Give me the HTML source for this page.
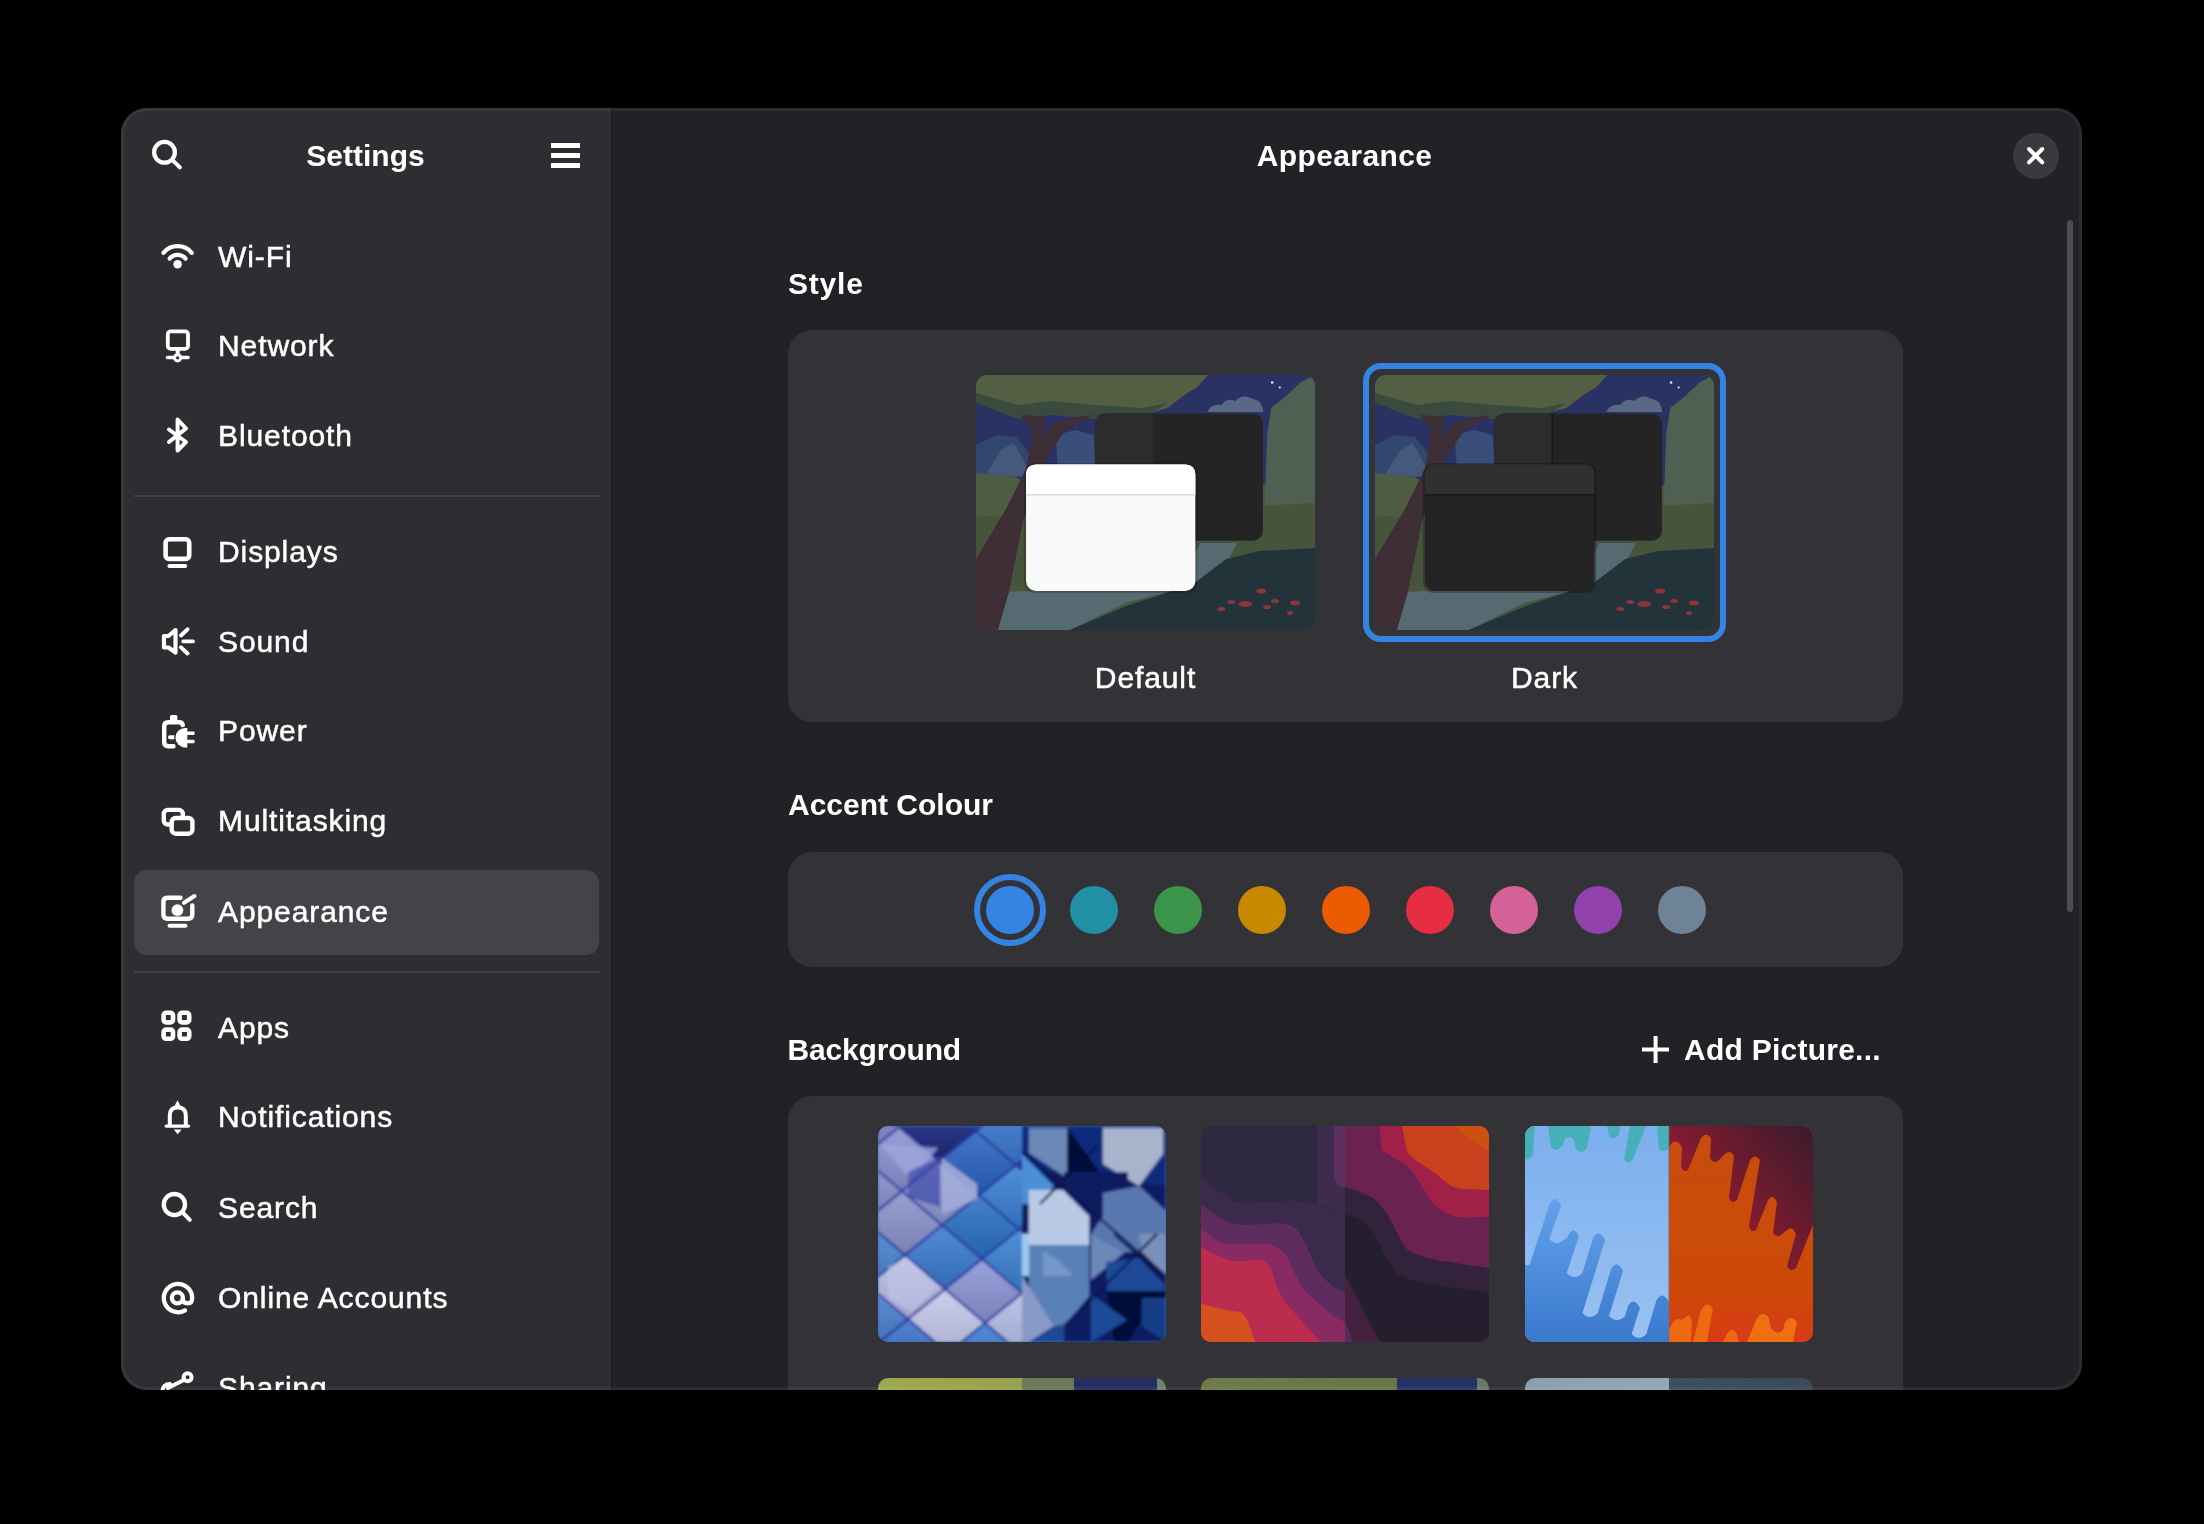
<!DOCTYPE html>
<html><head><meta charset="utf-8">
<style>
html,body{margin:0;padding:0;background:#000;width:2204px;height:1524px;overflow:hidden}
body{font-family:"Liberation Sans",sans-serif;color:#fff}
#win{position:absolute;left:121px;top:108px;width:1961px;height:1282px;border-radius:26px;overflow:hidden;background:#222226}
#in{position:absolute;left:-121px;top:-108px;width:2204px;height:1524px;will-change:transform}
.a{position:absolute}
.t{position:absolute;white-space:nowrap;font-size:30px;line-height:30px;letter-spacing:0.9px;-webkit-text-stroke:0.5px #fff;-webkit-font-smoothing:antialiased}
.b{letter-spacing:0;-webkit-text-stroke:0}
.b{font-weight:bold}
#side{position:absolute;left:121px;top:108px;width:490px;height:1282px;background:#2e2e32;border-right:2px solid #1d1d21}
.sep{position:absolute;left:134px;width:466px;height:2px;background:#414145}
.ic{position:absolute;left:162px;width:32px;height:32px}
.card{position:absolute;left:788px;width:1115px;background:#333337;border-radius:24px}
.dot{position:absolute;width:48px;height:48px;border-radius:50%;top:885.5px}
.thumb{position:absolute;width:288px;height:216px;border-radius:10px;overflow:hidden}
#border{position:absolute;left:121px;top:108px;width:1961px;height:1282px;border-radius:26px;box-shadow:inset 0 0 0 3px rgba(255,255,255,0.05);pointer-events:none}
</style></head>
<body>
<div id="win"><div id="in">
  <div id="side"></div>

  <!-- sidebar header -->
  
  <div class="t b" style="left:121px;width:489px;text-align:center;top:140.8px">Settings</div>
  <div class="a" style="left:551px;top:143px;width:29px;height:5px;background:#fff"></div>
  <div class="a" style="left:551px;top:153px;width:29px;height:5px;background:#fff"></div>
  <div class="a" style="left:551px;top:163px;width:29px;height:5px;background:#fff"></div>

  <!-- sidebar rows -->
  <div class="a" style="left:134px;top:870px;width:465px;height:85px;border-radius:13px;background:#444448"></div>
  <div class="sep" style="top:495px"></div>
  <div class="sep" style="top:971px"></div>

  <div class="t" style="left:218px;top:241.5px">Wi-Fi</div>
  <div class="t" style="left:218px;top:331px">Network</div>
  <div class="t" style="left:218px;top:420.5px">Bluetooth</div>
  <div class="t" style="left:218px;top:537px">Displays</div>
  <div class="t" style="left:218px;top:627px">Sound</div>
  <div class="t" style="left:218px;top:716px">Power</div>
  <div class="t" style="left:218px;top:806px">Multitasking</div>
  <div class="t" style="left:218px;top:897px">Appearance</div>
  <div class="t" style="left:218px;top:1012.5px">Apps</div>
  <div class="t" style="left:218px;top:1101.5px">Notifications</div>
  <div class="t" style="left:218px;top:1193px">Search</div>
  <div class="t" style="left:218px;top:1283px">Online Accounts</div>
  <div class="t" style="left:218px;top:1372.5px">Sharing</div>

  <!-- main header -->
  <div class="t b" style="left:609px;width:1471px;text-align:center;top:140.5px;letter-spacing:0.4px">Appearance</div>
  <div class="a" style="left:2012.5px;top:132.5px;width:46px;height:46px;border-radius:50%;background:#3a3a3e"></div>
  
  <div class="a" style="left:2067px;top:220px;width:6px;height:692px;border-radius:3px;background:#4e4e52"></div>

  <!-- Style -->
  <div class="t b" style="left:788px;top:268.5px;letter-spacing:0.8px">Style</div>
  <div class="card" style="top:330px;height:392px"></div>
  <div class="a" id="pv1" style="left:976px;top:375px;width:339px;height:255px;border-radius:11px;overflow:hidden;background:#55643f"><svg width="339" height="255" viewBox="0 0 340 255" preserveAspectRatio="none" style="display:block">
  <rect width="340" height="255" fill="#48563e"/>
  <!-- sky navy -->
  <rect x="0" y="0" width="340" height="110" fill="#293262"/>
  <!-- left blue mountains -->
  <path d="M0 70 L20 60 L40 62 L55 80 L60 100 L0 105 Z" fill="#33466e"/>
  <path d="M10 100 L25 75 L38 68 L50 90 L52 102 Z" fill="#46587c"/>
  <path d="M80 60 L100 55 L118 60 L120 92 L82 95 Z" fill="#394e78"/>
  <!-- clouds -->
  <path d="M232 37 Q236 28 246 30 Q252 22 260 26 Q268 18 278 24 Q288 26 288 37 Z" fill="#66748e" opacity="0.8"/>
  <circle cx="297" cy="7.5" r="1.3" fill="#e8ecf4"/>
  <circle cx="304.6" cy="12.5" r="1.1" fill="#e8ecf4"/>
  <!-- canopy -->
  <path d="M0 0 H233 L222 12 L209 20 L192 33 L167 40 L117 38 L75 33 L42 38 L0 23 Z" fill="#545e42"/>
  <path d="M0 18 L42 30 L75 26 L117 30 L167 33 L192 28 L170 42 L117 44 L75 40 L42 44 L0 28 Z" fill="#3a4a3c"/>
  <!-- right cliff -->
  <path d="M340 0 V176 L288 178 L290 117 L292 60 L296 33 L310 22 L326 7 Z" fill="#4f6052"/>
  <!-- left green hill -->
  <path d="M0 98 L40 102 L60 115 L60 170 L0 175 Z" fill="#4e5c42"/>
  <!-- middle field -->
  <path d="M0 140 L120 150 L221 134 L340 128 L340 185 L0 215 Z" fill="#46543c"/>
  <!-- river -->
  <path d="M22 255 L94 255 L150 228 L218 210 L252 186 L262 168 L225 168 L210 196 L140 214 L22 217 Z" fill="#566a72"/>
  <!-- dark hill -->
  <path d="M94 255 L151 231 L218 209 L251 184 L284 176 L340 173 L340 255 Z" fill="#22343a"/>
  <!-- mushrooms -->
  <g fill="#8e3438">
    <ellipse cx="286" cy="216" rx="5" ry="2.5"/><ellipse cx="270" cy="229" rx="7" ry="3"/>
    <ellipse cx="256" cy="227" rx="4" ry="2"/><ellipse cx="246" cy="234" rx="4" ry="2"/>
    <ellipse cx="300" cy="226" rx="4" ry="2"/><ellipse cx="320" cy="228" rx="5" ry="2.5"/>
    <ellipse cx="292" cy="232" rx="4" ry="2"/><ellipse cx="315" cy="238" rx="3" ry="2"/>
  </g>
  <!-- trunk -->
  <path d="M0 184 L30 134 L50 94 L57 55 L45 40 L70 42 L67 60 L80 48 L100 42 L117 40 L90 55 L72 80 L67 94 L47 147 L33 217 L22 255 L0 255 Z" fill="#3e2e36"/>

  <rect x="119.6" y="38.5" width="168.2" height="127.2" rx="10" fill="#242424"/>
  <path d="M129.6 38.5 H177.4 V165.7 H129.6 Q119.6 165.7 119.6 155.7 V48.5 Q119.6 38.5 129.6 38.5 Z" fill="#2c2c2c"/>
  <rect x="48" y="88" width="174" height="130" rx="11" fill="#000" opacity="0.18"/>
  <rect x="50.2" y="89.5" width="169.8" height="126.4" rx="10" fill="#fafafa"/>
  <path d="M60.2 89.5 H210 Q220 89.5 220 99.5 V119 H50.2 V99.5 Q50.2 89.5 60.2 89.5 Z" fill="#ffffff"/>
  <rect x="50.2" y="119" width="169.8" height="1.6" fill="#dcdcdc"/>
</svg></div>
  <div class="a" style="left:1363px;top:363px;width:351px;height:267px;border-radius:18px;border:6px solid #3584e4"></div>
  <div class="a" id="pv2" style="left:1375px;top:375px;width:339px;height:255px;border-radius:11px;overflow:hidden;background:#55643f"><svg width="339" height="255" viewBox="0 0 340 255" preserveAspectRatio="none" style="display:block">
  <rect width="340" height="255" fill="#48563e"/>
  <!-- sky navy -->
  <rect x="0" y="0" width="340" height="110" fill="#293262"/>
  <!-- left blue mountains -->
  <path d="M0 70 L20 60 L40 62 L55 80 L60 100 L0 105 Z" fill="#33466e"/>
  <path d="M10 100 L25 75 L38 68 L50 90 L52 102 Z" fill="#46587c"/>
  <path d="M80 60 L100 55 L118 60 L120 92 L82 95 Z" fill="#394e78"/>
  <!-- clouds -->
  <path d="M232 37 Q236 28 246 30 Q252 22 260 26 Q268 18 278 24 Q288 26 288 37 Z" fill="#66748e" opacity="0.8"/>
  <circle cx="297" cy="7.5" r="1.3" fill="#e8ecf4"/>
  <circle cx="304.6" cy="12.5" r="1.1" fill="#e8ecf4"/>
  <!-- canopy -->
  <path d="M0 0 H233 L222 12 L209 20 L192 33 L167 40 L117 38 L75 33 L42 38 L0 23 Z" fill="#545e42"/>
  <path d="M0 18 L42 30 L75 26 L117 30 L167 33 L192 28 L170 42 L117 44 L75 40 L42 44 L0 28 Z" fill="#3a4a3c"/>
  <!-- right cliff -->
  <path d="M340 0 V176 L288 178 L290 117 L292 60 L296 33 L310 22 L326 7 Z" fill="#4f6052"/>
  <!-- left green hill -->
  <path d="M0 98 L40 102 L60 115 L60 170 L0 175 Z" fill="#4e5c42"/>
  <!-- middle field -->
  <path d="M0 140 L120 150 L221 134 L340 128 L340 185 L0 215 Z" fill="#46543c"/>
  <!-- river -->
  <path d="M22 255 L94 255 L150 228 L218 210 L252 186 L262 168 L225 168 L210 196 L140 214 L22 217 Z" fill="#566a72"/>
  <!-- dark hill -->
  <path d="M94 255 L151 231 L218 209 L251 184 L284 176 L340 173 L340 255 Z" fill="#22343a"/>
  <!-- mushrooms -->
  <g fill="#8e3438">
    <ellipse cx="286" cy="216" rx="5" ry="2.5"/><ellipse cx="270" cy="229" rx="7" ry="3"/>
    <ellipse cx="256" cy="227" rx="4" ry="2"/><ellipse cx="246" cy="234" rx="4" ry="2"/>
    <ellipse cx="300" cy="226" rx="4" ry="2"/><ellipse cx="320" cy="228" rx="5" ry="2.5"/>
    <ellipse cx="292" cy="232" rx="4" ry="2"/><ellipse cx="315" cy="238" rx="3" ry="2"/>
  </g>
  <!-- trunk -->
  <path d="M0 184 L30 134 L50 94 L57 55 L45 40 L70 42 L67 60 L80 48 L100 42 L117 40 L90 55 L72 80 L67 94 L47 147 L33 217 L22 255 L0 255 Z" fill="#3e2e36"/>

  <rect x="119.6" y="38.5" width="168.2" height="127.2" rx="10" fill="#242424"/>
  <path d="M129.6 38.5 H177.4 V165.7 H129.6 Q119.6 165.7 119.6 155.7 V48.5 Q119.6 38.5 129.6 38.5 Z" fill="#2c2c2c"/>
  <rect x="177" y="38.5" width="1.4" height="52" fill="#161616"/>
  <rect x="48" y="88" width="174" height="130" rx="11" fill="#000" opacity="0.25"/>
  <rect x="50.2" y="89.5" width="169.8" height="126.4" rx="10" fill="#242424"/>
  <path d="M60.2 89.5 H210 Q220 89.5 220 99.5 V119 H50.2 V99.5 Q50.2 89.5 60.2 89.5 Z" fill="#303030"/>
  <rect x="50.2" y="119" width="169.8" height="1.6" fill="#1a1a1a"/>
</svg></div>
  <div class="t" style="left:976px;width:339px;text-align:center;top:662.5px">Default</div>
  <div class="t" style="left:1375px;width:339px;text-align:center;top:662.5px">Dark</div>

  <!-- Accent -->
  <div class="t b" style="left:788px;top:790px">Accent Colour</div>
  <div class="card" style="top:852px;height:115px"></div>
  <div class="a" style="left:973.5px;top:873.5px;width:60px;height:60px;border-radius:50%;border:6px solid #3584e4"></div>
  <div class="dot" style="left:985.5px;background:#3584e4"></div>
  <div class="dot" style="left:1069.5px;background:#2190a4"></div>
  <div class="dot" style="left:1153.5px;background:#3a944a"></div>
  <div class="dot" style="left:1237.5px;background:#c88800"></div>
  <div class="dot" style="left:1321.5px;background:#ed5b00"></div>
  <div class="dot" style="left:1405.5px;background:#e62d42"></div>
  <div class="dot" style="left:1489.5px;background:#d56199"></div>
  <div class="dot" style="left:1573.5px;background:#9141ac"></div>
  <div class="dot" style="left:1657.5px;background:#6f8396"></div>

  <!-- Background -->
  <div class="t b" style="left:787.5px;top:1035px;letter-spacing:-0.15px">Background</div>
  
  <div class="t b" style="left:1684px;top:1035px;letter-spacing:0.25px">Add Picture...</div>
  <div class="card" style="top:1096px;height:400px"></div>
  <div class="thumb" id="th1" style="left:878px;top:1125.5px;background:#3a6cc8"><svg width="288" height="216" viewBox="0 0 288 216" style="display:block"><defs><filter id="bl2" x="-5%" y="-5%" width="110%" height="110%"><feGaussianBlur stdDeviation="1.7"/></filter><clipPath id="cl"><rect x="0" y="0" width="144" height="216"/></clipPath><clipPath id="cr"><rect x="144" y="0" width="144" height="216"/></clipPath><linearGradient id="sh" x1="0" y1="0" x2="0" y2="1"><stop offset="0" stop-color="#fff" stop-opacity="0.12"/><stop offset="1" stop-color="#000" stop-opacity="0.12"/></linearGradient></defs><g filter="url(#bl2)"><g clip-path="url(#cl)"><rect width="144" height="216" fill="#26369c"/><polygon points="22.7,1.1 60.9,33.6 96.3,4.9 58.1,-27.6" fill="#1e2a80"/><polygon points="22.7,1.1 60.9,33.6 96.3,4.9 58.1,-27.6" fill="url(#sh)"/><polygon points="-14.3,31.1 23.9,63.6 59.3,34.9 21.1,2.4" fill="#8a92d0"/><polygon points="-14.3,31.1 23.9,63.6 59.3,34.9 21.1,2.4" fill="url(#sh)"/><polygon points="62.7,35.1 100.9,67.6 136.3,38.9 98.1,6.4" fill="#2a62c0"/><polygon points="62.7,35.1 100.9,67.6 136.3,38.9 98.1,6.4" fill="url(#sh)"/><polygon points="25.7,65.1 63.9,97.6 99.3,68.9 61.1,36.4" fill="#8e98d2"/><polygon points="25.7,65.1 63.9,97.6 99.3,68.9 61.1,36.4" fill="url(#sh)"/><polygon points="102.7,69.1 140.9,101.6 176.3,72.9 138.1,40.4" fill="#3a7ed4"/><polygon points="102.7,69.1 140.9,101.6 176.3,72.9 138.1,40.4" fill="url(#sh)"/><polygon points="-51.3,61.1 -13.1,93.6 22.3,64.9 -15.9,32.4" fill="#8890cc"/><polygon points="-51.3,61.1 -13.1,93.6 22.3,64.9 -15.9,32.4" fill="url(#sh)"/><polygon points="-11.3,95.1 26.9,127.6 62.3,98.9 24.1,66.4" fill="#8a92cc"/><polygon points="-11.3,95.1 26.9,127.6 62.3,98.9 24.1,66.4" fill="url(#sh)"/><polygon points="65.7,99.1 103.9,131.6 139.3,102.9 101.1,70.4" fill="#2a70c4"/><polygon points="65.7,99.1 103.9,131.6 139.3,102.9 101.1,70.4" fill="url(#sh)"/><polygon points="-48.3,125.1 -10.1,157.6 25.3,128.9 -12.9,96.4" fill="#4a86d4"/><polygon points="-48.3,125.1 -10.1,157.6 25.3,128.9 -12.9,96.4" fill="url(#sh)"/><polygon points="-8.3,159.1 29.9,191.6 65.3,162.9 27.1,130.4" fill="#b8bce4"/><polygon points="-8.3,159.1 29.9,191.6 65.3,162.9 27.1,130.4" fill="url(#sh)"/><polygon points="28.7,129.1 66.9,161.6 102.3,132.9 64.1,100.4" fill="#3a7ad0"/><polygon points="28.7,129.1 66.9,161.6 102.3,132.9 64.1,100.4" fill="url(#sh)"/><polygon points="105.7,133.1 143.9,165.6 179.3,136.9 141.1,104.4" fill="#3a80d0"/><polygon points="105.7,133.1 143.9,165.6 179.3,136.9 141.1,104.4" fill="url(#sh)"/><polygon points="68.7,163.1 106.9,195.6 142.3,166.9 104.1,134.4" fill="#8a94d4"/><polygon points="68.7,163.1 106.9,195.6 142.3,166.9 104.1,134.4" fill="url(#sh)"/><polygon points="-45.3,189.1 -7.1,221.6 28.3,192.9 -9.9,160.4" fill="#4a80d0"/><polygon points="-45.3,189.1 -7.1,221.6 28.3,192.9 -9.9,160.4" fill="url(#sh)"/><polygon points="31.7,193.1 69.9,225.6 105.3,196.9 67.1,164.4" fill="#c4c8ec"/><polygon points="31.7,193.1 69.9,225.6 105.3,196.9 67.1,164.4" fill="url(#sh)"/><polygon points="71.7,227.1 109.9,259.6 145.3,230.9 107.1,198.4" fill="#3a7ad0"/><polygon points="71.7,227.1 109.9,259.6 145.3,230.9 107.1,198.4" fill="url(#sh)"/><polygon points="108.7,197.1 146.9,229.6 182.3,200.9 144.1,168.4" fill="#b4bce4"/><polygon points="108.7,197.1 146.9,229.6 182.3,200.9 144.1,168.4" fill="url(#sh)"/><polygon points="99.7,5.1 137.9,37.6 173.3,8.9 135.1,-23.6" fill="#3a78d0"/><polygon points="99.7,5.1 137.9,37.6 173.3,8.9 135.1,-23.6" fill="url(#sh)"/><polygon points="59.7,-28.9 97.9,3.6 133.3,-25.1 95.1,-57.6" fill="#2a50b0"/><polygon points="59.7,-28.9 97.9,3.6 133.3,-25.1 95.1,-57.6" fill="url(#sh)"/><polygon points="-17.3,-32.9 20.9,-0.4 56.3,-29.1 18.1,-61.6" fill="#5a62b8"/><polygon points="-17.3,-32.9 20.9,-0.4 56.3,-29.1 18.1,-61.6" fill="url(#sh)"/><polygon points="19.7,-62.9 57.9,-30.4 93.3,-59.1 55.1,-91.6" fill="#5a62b8"/><polygon points="19.7,-62.9 57.9,-30.4 93.3,-59.1 55.1,-91.6" fill="url(#sh)"/><polygon points="142.7,103.1 180.9,135.6 216.3,106.9 178.1,74.4" fill="#3a80d0"/><polygon points="142.7,103.1 180.9,135.6 216.3,106.9 178.1,74.4" fill="url(#sh)"/><polygon points="145.7,167.1 183.9,199.6 219.3,170.9 181.1,138.4" fill="#b4bce4"/><polygon points="145.7,167.1 183.9,199.6 219.3,170.9 181.1,138.4" fill="url(#sh)"/><polygon points="-54.3,-2.9 -16.1,29.6 19.3,0.9 -18.9,-31.6" fill="#8088c8"/><polygon points="-54.3,-2.9 -16.1,29.6 19.3,0.9 -18.9,-31.6" fill="url(#sh)"/><polygon points="-88.3,91.1 -50.1,123.6 -14.7,94.9 -52.9,62.4" fill="#4a86d4"/><polygon points="-88.3,91.1 -50.1,123.6 -14.7,94.9 -52.9,62.4" fill="url(#sh)"/><polygon points="-85.3,155.1 -47.1,187.6 -11.7,158.9 -49.9,126.4" fill="#4a80d0"/><polygon points="-85.3,155.1 -47.1,187.6 -11.7,158.9 -49.9,126.4" fill="url(#sh)"/><polygon points="-5.3,223.1 32.9,255.6 68.3,226.9 30.1,194.4" fill="#3a70c8"/><polygon points="-5.3,223.1 32.9,255.6 68.3,226.9 30.1,194.4" fill="url(#sh)"/><polygon points="34.7,257.1 72.9,289.6 108.3,260.9 70.1,228.4" fill="#3a70c8"/><polygon points="34.7,257.1 72.9,289.6 108.3,260.9 70.1,228.4" fill="url(#sh)"/><polygon points="111.7,261.1 149.9,293.6 185.3,264.9 147.1,232.4" fill="#b4bce4"/><polygon points="111.7,261.1 149.9,293.6 185.3,264.9 147.1,232.4" fill="url(#sh)"/><polygon points="2,18 60,22 33,54" fill="#9ea6dc" opacity="0.8"/><polygon points="64,32 99,58 99,73 64,88" fill="#a2acd8" opacity="0.9"/><polygon points="10,140 30,132 60,160 34,186 10,172" fill="#c0c4ea" opacity="0.6"/><polygon points="30,46 62,31 62,81 30,71" fill="#3a48a8" opacity="0.7"/></g><g clip-path="url(#cr)"><rect x="144" width="144" height="216" fill="#0a1a60"/><polygon points="144,0 194,0 194,46 144,46" fill="#0a2a78"/><polygon points="194,0 288,0 288,60 194,46" fill="#0e2c7c"/><polygon points="151,2 189,2 189,52 151,27" fill="#6a88b8"/><polygon points="189,2 222,46 189,52" fill="#000a38"/><polygon points="225,2 285,2 285,28 261,60 225,38" fill="#a8b4cc"/><polygon points="186,46 250,46 250,89 219,90 186,60" fill="#101a60"/><polygon points="144,28 176,60 162,78 144,78" fill="#4a90d8"/><polygon points="151,64 185,64 211,90 211,119 151,119" fill="#b8cae6"/><polygon points="225,67 261,60 288,85 288,126 264,126 247,126 213,108 225,90" fill="#5a78b0"/><polygon points="144,108 151,108 151,150 144,150" fill="#9ccaf0"/><polygon points="151,119 211,119 211,197 176,200 151,179" fill="#5a80b8"/><polygon points="213,108 247,126 213,154" fill="#6a88b8"/><polygon points="261,108 288,108 288,150 264,126" fill="#7a90b8"/><polygon points="228,136 261,132 286,158 286,165 229,165" fill="#1a4a98"/><polygon points="229,165 288,165 288,172 264,193 250,216 236,216" fill="#000a38"/><polygon points="213,168 249,194 213,216" fill="#1a4a98"/><polygon points="186,200 213,168 213,216 186,216" fill="#0a1a60"/><polygon points="264,172 288,172 288,216 264,200" fill="#183c88"/><polygon points="144,150 176,200 151,216 144,216" fill="#8a9ac8"/><polygon points="176,200 186,200 186,216 151,216" fill="#1a4a98"/><polygon points="165,125 179,133 195,150 165,150" fill="#8fb0d8" opacity="0.5"/><path d="M144 25 L219 90 L288 150 M236 108 L288 154 M186 200 L279 108 M162 78 L219 20" stroke="#06124a" stroke-width="2.5" fill="none" opacity="0.8"/></g></g></svg></div>
  <div class="thumb" id="th2" style="left:1201px;top:1125.5px;background:#3a2a48"><svg width="288" height="216" viewBox="0 0 288 216" style="display:block"><rect width="288" height="216" fill="#2e2840"/><path d="M0 50 C8 58 14 64 21 67 C28 72 34 77 42 77 C60 77 85 74 99 75 C106 76 110 78 113 79 C125 82 135 84 144 85 V216 H0 Z" fill="#3c2a4c"/><path d="M0 78 C14 90 28 99 42 99 C58 99 75 96 85 98 C94 100 99 106 102 113 C110 128 114 142 120 149 C128 158 136 164 144 166 V216 H0 Z" fill="#5e2c5e"/><path d="M0 102 C10 110 18 118 28 118 C45 119 62 117 71 119 C80 122 85 128 88 135 C95 150 102 165 110 170 C120 180 132 192 144 196 V216 H0 Z" fill="#8a2a62"/><path d="M0 120 C12 128 24 135 35 135 C50 135 60 132 64 135 C70 140 72 148 74 156 C78 168 84 178 91 184 C100 194 110 206 120 216 H0 Z" fill="#bc2c4c"/><path d="M0 177 C14 182 28 185 40 186 C46 190 50 204 54 216 H0 Z" fill="#d4501e"/><path d="M116 0 H144 V85 C135 84 125 81 116 79 Z" fill="#3e2c4e"/><path d="M133 0 H144 V62 C138 60 133 56 133 48 Z" fill="#5e3060"/><rect x="144" y="0" width="144" height="216" fill="#241e2e"/><path d="M144 0 H288 V166 C270 164 252 162 241 160 C222 157 205 153 198 149 C190 140 186 132 183 128 C176 112 170 100 163 96 C155 92 150 90 144 88 Z" fill="#32223c"/><path d="M144 0 H288 V142 C272 140 255 137 241 135 C225 132 211 128 205.5 123 C198 112 193 100 188.5 92 C182 82 176 74 170 71 C160 66 150 62 144 61 Z" fill="#6a2250"/><path d="M178.6 0 H288 V91 C275 91 263 92 255 91 C242 87 233 80 227 71 C220 58 212 44 203 37 C194 32 184 28 181 24 Z" fill="#a02048"/><path d="M201 0 H288 V64 C275 64 263 63 255 62 C246 58 240 52 234 47 C225 40 210 34 205.5 24 Z" fill="#c8401c"/><path d="M255 0 H288 V24 C275 20 262 10 255 0 Z" fill="#cc5010"/><path d="M144 150 C155 165 165 195 180 216 H144 Z" fill="#44223f"/><path d="M144 196 C148 204 150 210 152 216 H144 Z" fill="#5a2a58"/></svg></div>
  <div class="thumb" id="th3" style="left:1525px;top:1125.5px;background:#c85010"><svg width="288" height="216" viewBox="0 0 288 216" style="display:block"><defs><linearGradient id="lb" x1="0" y1="0" x2="0" y2="1"><stop offset="0" stop-color="#7cafee"/><stop offset="1" stop-color="#9ac2f2"/></linearGradient><linearGradient id="db" x1="0" y1="0" x2="0" y2="1"><stop offset="0" stop-color="#62a0ea"/><stop offset="0.5" stop-color="#4e8edc"/><stop offset="1" stop-color="#3a78cc"/></linearGradient><linearGradient id="mr" x1="1" y1="0" x2="0.2" y2="1"><stop offset="0" stop-color="#381c2c"/><stop offset="0.55" stop-color="#8c1a30"/><stop offset="1" stop-color="#b41a2e"/></linearGradient><linearGradient id="og" x1="0" y1="0" x2="0" y2="1"><stop offset="0" stop-color="#c84c0c"/><stop offset="0.72" stop-color="#cc4a08"/><stop offset="1" stop-color="#d83a16"/></linearGradient></defs><rect width="144" height="216" fill="url(#lb)"/><g fill="#45b0ba"><path d="M0 0 H10 L8 28 Q5 35 0 33 Z"/><path d="M23 0 H66 L62 22 Q57 29 51 23 L49 14 Q45 8 40 13 L37 20 Q31 27 26 21 Z"/><path d="M82 0 H95 L94 9 Q89 15 84 10 Z"/><path d="M105 0 H121 L108 33 Q103 40 99 33 Z"/><path d="M132 0 H144 V22 Q140 28 134 23 Z"/></g><path d="M0 216 V139 L4.5 139 L24 80 Q30 66 36 80 L24.3 113 Q32 121 40 113 L42 112 Q48 98 54 110 L41.7 147 Q49.6 155 57.5 147 L68 112 Q74 102 80 114 L57.5 187 Q65 195 72.8 187 L86 143 Q92 133 98 145 L84 190 Q92 198 100 190 L103 180 Q109 170 115 182 L106.6 208 Q114 216 121.3 208 L131.5 174 Q137.5 164 144 176 V216 Z" fill="url(#db)"/><rect x="144" y="0" width="144" height="216" fill="url(#mr)"/><path d="M144 216 V22 Q147 14 152 16 Q157 18 157 24 L156 40 Q158 47 163 44 L176 12 Q181 5 186 12 L185 32 Q189 39 194 34 L200 28 Q205 23 209 30 L204 72 Q207 79 212 74 L225 34 Q230 27 235 34 L224 100 Q226 107 231 104 L243 74 Q248 67 252 76 L248 107 Q252 113 257 108 L262 104 Q267 99 271 108 L262 140 Q265 147 271 142 L288 99 V216 Z" fill="url(#og)"/><path d="M144 216 V204 Q150 190 156 194 L160 192 Q164 186 167 194 L166 216 Z" fill="#ec6a12"/><path d="M168 216 L176 184 Q182 174 188 182 L182 216 Z" fill="#ec6a12"/><path d="M198 216 L202 208 Q207 200 212 208 L214 216 Z" fill="#ec6a12"/><path d="M222 216 L232 192 Q238 184 244 192 L246 202 Q252 210 258 204 L260 196 Q266 188 272 196 L268 216 Z" fill="#ee7010"/><rect x="143.2" y="0" width="1.2" height="216" fill="#6d6f86" opacity="0.6"/></svg></div>
  <div class="thumb" style="left:878px;top:1378px;background:linear-gradient(90deg,#9ea84e 0,#98a24e 50%,#6c7858 50%,#6c7858 68%,#262e60 68%,#262e60 97%,#70806e 97%)"></div>
  <div class="thumb" style="left:1201px;top:1378px;background:linear-gradient(90deg,#6e7a48 0,#6a7646 68%,#283266 68%,#283266 96%,#6c7868 96%)"></div>
  <div class="thumb" style="left:1525px;top:1378px;background:linear-gradient(90deg,#8aa0b0 0,#92a8b6 50%,#3e4e5a 50%,#3a4a56 100%)"></div>

  <!-- sidebar icons -->
  <svg class="a" style="left:0;top:0" width="2204" height="1524" viewBox="0 0 2204 1524">
    <g fill="none" stroke="#fff" stroke-linecap="round" stroke-linejoin="round">
      <!-- wifi -->
      <path d="M163.4 252.8 A18.5 18.5 0 0 1 191.8 252.8" stroke-width="4.2"/>
      <path d="M169.6 258.6 A10.3 10.3 0 0 1 185.6 258.6" stroke-width="4.2"/>
      <!-- network -->
      <rect x="167.8" y="331.3" width="20.2" height="17.6" rx="3" stroke-width="3.8"/>
      <path d="M167.5 357.5 H188" stroke-width="3.6"/>
      <path d="M177.7 350 V355" stroke-width="4"/>
      <!-- bluetooth -->
      <path d="M169 429.5 L186 442 L177.6 450.5 V419.5 L186 428.5 L169 442" stroke-width="4"/>
      <!-- displays -->
      <rect x="165.6" y="539.3" width="23.6" height="19.6" rx="3.5" stroke-width="4.6"/>
      <path d="M169.3 566 H185.3" stroke-width="3.8"/>
      <!-- sound -->
      <path d="M175.5 630 L168.5 636 H164 V647.5 H168.5 L175.5 652.5 Z" stroke-width="4.2"/>
      <path d="M181 635.5 L187.5 629.3 M183.3 641.4 H193 M181 647.3 L187.5 653.5" stroke-width="3.9"/>
      <!-- power -->
      <path d="M182.8 725.5 Q182.5 722.3 179 722.3 H168.3 Q164.2 722.3 164.2 726.3 V742 Q164.2 746.2 168.3 746.2 H173.5" stroke-width="4.4"/>
      <path d="M170 737.3 H178" stroke-width="4"/>
      <!-- multitasking back -->
      <rect x="163.8" y="809.9" width="19" height="14.6" rx="4" stroke-width="4.4"/>
      <!-- appearance -->
      <path d="M180.5 897.7 H167.5 Q163.4 897.7 163.4 901.8 V914.5 Q163.4 918.7 167.5 918.7 H188.2 Q192.3 918.7 192.3 914.5 V905.5" stroke-width="4.4"/>
      <path d="M169.5 925.8 H185.5" stroke-width="3.9"/>
      <path d="M184 902.8 L194.5 896" stroke-width="4"/>
      <!-- apps -->
      <rect x="163.6" y="1012.8" width="9.4" height="9.6" rx="2.5" stroke-width="4.6"/>
      <rect x="179.6" y="1012.8" width="9.6" height="9.6" rx="2.5" stroke-width="4.6"/>
      <rect x="163.6" y="1029.6" width="9.4" height="9.2" rx="2.5" stroke-width="4.6"/>
      <rect x="179.6" y="1029.6" width="9.6" height="9.2" rx="2.5" stroke-width="4.6"/>
      <!-- notifications -->
      <path d="M169.8 1125 V1115.5 Q169.8 1107.6 177.6 1107.6 Q185.8 1107.6 185.8 1115.5 V1125" stroke-width="4"/>
      <path d="M166.2 1126.1 H188.5" stroke-width="3.4"/>
      <!-- search -->
      <circle cx="174.4" cy="1204.6" r="10.6" stroke-width="4.3"/>
      <path d="M183.3 1213.2 L189.8 1219.8" stroke-width="4"/>
      <!-- header search -->
      <circle cx="164.5" cy="152.3" r="10.4" stroke-width="4.2"/>
      <path d="M173.2 160.8 L179.9 167.4" stroke-width="4"/>
      <!-- online accounts -->
      <circle cx="177.4" cy="1297.8" r="5.5" stroke-width="4.3"/>
      <path d="M185 1310.4 A14.2 14.2 0 1 1 192.2 1298 Q192.2 1303.4 187.6 1303.4 Q182.9 1303.4 182.9 1298.5" stroke-width="4.3"/>
      <!-- sharing -->
      <circle cx="187.6" cy="1377.3" r="4" stroke-width="4"/>
      <path d="M183.8 1380 L168 1388 M162 1392 Q163 1384 170 1384" stroke-width="4"/>
    </g>
    <g fill="#fff" stroke="none">
      <circle cx="177.6" cy="264.3" r="4.3"/>
      <circle cx="177.6" cy="357.8" r="4.6"/>
      <rect x="170" y="715" width="7.4" height="6" rx="1.5"/>
      <circle cx="177.4" cy="910.2" r="5.9"/>
      <path d="M173.8 1129.4 H181.6 L177.7 1134.2 Z"/>
      <path d="M177.5 1100.2 L174.2 1106.5 H180.8 Z"/>
    </g>
    <!-- network node hole -->
    <circle cx="177.6" cy="357.8" r="1.6" fill="#2e2e32"/>
    <!-- power plug -->
    <path d="M187.3 727.9 H185.2 A9.75 9.75 0 0 0 185.2 747.4 H187.3 Z" fill="#fff" stroke="#2e2e32" stroke-width="2.4"/>
    <path d="M187.3 727.9 H185.2 A9.75 9.75 0 0 0 185.2 747.4 H187.3 Z" fill="#fff"/>
    <rect x="186" y="731.4" width="8.6" height="3.6" rx="1.2" fill="#fff"/>
    <rect x="186" y="739.7" width="8.6" height="3.6" rx="1.2" fill="#fff"/>
    <!-- multitasking front -->
    <rect x="171.7" y="818" width="20.7" height="15.7" rx="4" fill="#2e2e32" stroke="#fff" stroke-width="4.4"/>
    <!-- close x -->
    <path d="M2029 149 L2042.3 162.3 M2042.3 149 L2029 162.3" stroke="#fff" stroke-width="4" stroke-linecap="round"/>
    <!-- plus -->
    <path d="M1655.6 1036 V1063 M1642 1049.6 H1669" stroke="#fff" stroke-width="4"/>
  </svg>
</div></div>
<div id="border"></div>
</body></html>
